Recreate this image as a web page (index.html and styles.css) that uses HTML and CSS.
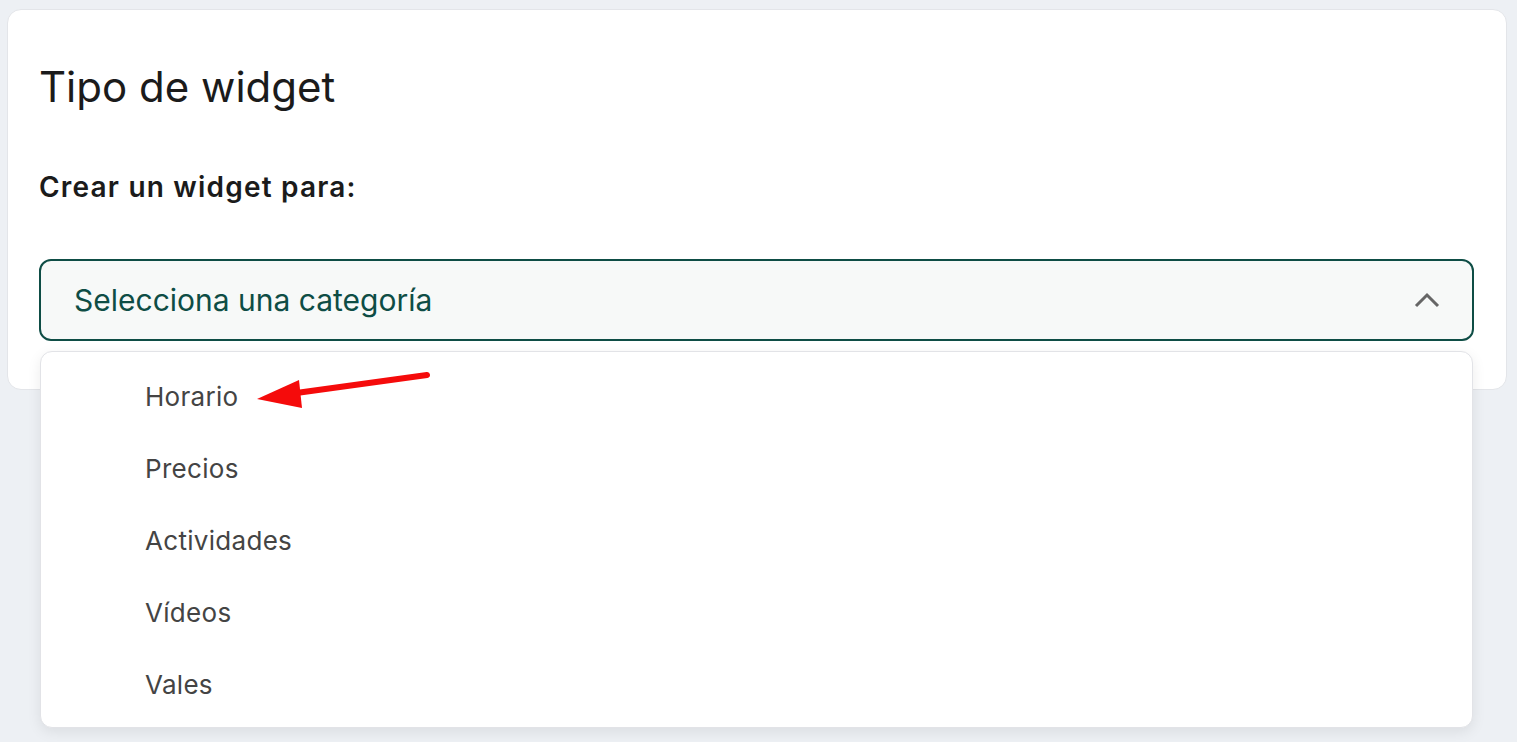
FILE: index.html
```html
<!DOCTYPE html>
<html lang="es">
<head>
    <meta charset="UTF-8">
    <meta name="viewport" content="width=device-width, initial-scale=1.0">
    <title>Tipo de widget</title>
    <link rel="stylesheet" href="styles.css">
</head>
<body>
    <div class="card">
        <h1>Tipo de widget</h1>
        <p class="label">Crear un widget para:</p>
        <div class="select-wrap">
            <div class="select">
                <span>Selecciona una categoría</span>
                <svg class="chevron" width="26" height="16" viewBox="0 0 26 16">
                    <path d="M2 14 L13 3 L24 14" fill="none" stroke="#666" stroke-width="3"/>
                </svg>
            </div>
            <ul class="menu">
                <li>Horario</li>
                <li>Precios</li>
                <li>Actividades</li>
                <li>Vídeos</li>
                <li>Vales</li>
            </ul>
            <svg class="arrow" width="200" height="50" viewBox="0 0 200 50">
                <line x1="188" y1="6" x2="50" y2="25" stroke="#f50b0b" stroke-width="6" stroke-linecap="round"/>
                <polygon points="18,30 60,11 63,39" fill="#f50b0b"/>
            </svg>
        </div>
    </div>
</body>
</html>
```

FILE: styles.css
```css
* {
    box-sizing: border-box;
}
body {
    margin: 0;
    min-height: 100vh;
    background-color: #edf0f4;
    font-family: Inter, "Noto Sans", sans-serif;
    color: #1b1b1b;
    padding: 9px 10px 0 7px;
}
.card {
    background-color: white;
    border: 1px solid #e3e5e9;
    border-radius: 14px;
    padding: 50px 32px 0 31px;
    height: 381px;
}
h1 {
    font-size: 42px;
    font-weight: 400;
    margin: 0;
    line-height: 54px;
}
.label {
    font-size: 28px;
    font-weight: 600;
    letter-spacing: 1.2px;
    margin: 56px 0 0;
    line-height: 34px;
}
.select-wrap {
    position: relative;
    margin-top: 55px;
}
.select {
    height: 82px;
    border: 2px solid #0e4d45;
    border-radius: 12px;
    background-color: #f7f9f8;
    display: flex;
    align-items: center;
    justify-content: space-between;
    padding: 0 32px 0 33px;
    color: #0e4d45;
    font-size: 30px;
}
.menu {
    position: absolute;
    top: 92px;
    left: 1px;
    right: 1px;
    margin: 0;
    padding: 9px 0 6px;
    list-style: none;
    background-color: white;
    border: 1px solid #e2e3e7;
    border-radius: 12px;
    box-shadow: 0 4px 14px rgba(0, 0, 0, 0.08);
}
.menu li {
    height: 72px;
    line-height: 72px;
    padding-left: 104px;
    font-size: 26px;
    letter-spacing: 0.3px;
    color: #444;
}
.arrow {
    position: absolute;
    top: 110px;
    left: 200px;
}
```
